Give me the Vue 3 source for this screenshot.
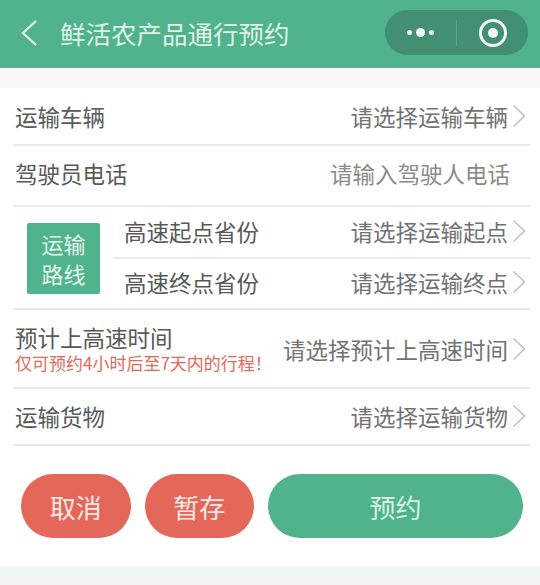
<script setup>
const rowsTop = [
  { id: 'vehicle', label: '运输车辆', value: '请选择运输车辆' }
]
</script>

<template>
  <div class="page">
    <header class="nav">
      <svg class="back" width="20" height="28" viewBox="0 0 20 28">
        <path d="M16 2 L3 14 L16 26" fill="none" stroke="#e3f3ec" stroke-width="2.2" />
      </svg>
      <span class="nav-title">鲜活农产品通行预约</span>
      <div class="capsule">
        <div class="cap-dots">
          <i class="dot small"></i><i class="dot big"></i><i class="dot small"></i>
        </div>
        <i class="cap-sep"></i>
        <div class="cap-target"><i class="target-in"></i></div>
      </div>
    </header>

    <main class="form">
      <div class="row r1" v-for="r in rowsTop" :key="r.id">
        <span class="label">{{ r.label }}</span>
        <span class="value">{{ r.value }}</span>
        <svg class="chev" width="14" height="24" viewBox="0 0 14 24"><path d="M1.5 1.5 L12.5 12 L1.5 22.5" fill="none" stroke="#bdbdbd" stroke-width="1.4" /></svg>
      </div>
      <div class="row r2">
        <span class="label">驾驶员电话</span>
        <span class="value input">请输入驾驶人电话</span>
      </div>
      <div class="route">
        <div class="route-tag"><span>运输</span><span>路线</span></div>
        <div class="route-rows">
          <div class="route-row first">
            <span class="label">高速起点省份</span>
            <span class="value">请选择运输起点</span>
            <svg class="chev" width="14" height="24" viewBox="0 0 14 24"><path d="M1.5 1.5 L12.5 12 L1.5 22.5" fill="none" stroke="#bdbdbd" stroke-width="1.4" /></svg>
          </div>
          <div class="route-row">
            <span class="label">高速终点省份</span>
            <span class="value">请选择运输终点</span>
            <svg class="chev" width="14" height="24" viewBox="0 0 14 24"><path d="M1.5 1.5 L12.5 12 L1.5 22.5" fill="none" stroke="#bdbdbd" stroke-width="1.4" /></svg>
          </div>
        </div>
      </div>
      <div class="row r4">
        <div class="stack">
          <span class="label">预计上高速时间</span>
          <span class="hint">仅可预约4小时后至7天内的行程！</span>
        </div>
        <span class="value">请选择预计上高速时间</span>
        <svg class="chev" width="14" height="24" viewBox="0 0 14 24"><path d="M1.5 1.5 L12.5 12 L1.5 22.5" fill="none" stroke="#bdbdbd" stroke-width="1.4" /></svg>
      </div>
      <div class="row r5">
        <span class="label">运输货物</span>
        <span class="value">请选择运输货物</span>
        <svg class="chev" width="14" height="24" viewBox="0 0 14 24"><path d="M1.5 1.5 L12.5 12 L1.5 22.5" fill="none" stroke="#bdbdbd" stroke-width="1.4" /></svg>
      </div>
      <div class="actions">
        <button class="btn red">取消</button>
        <button class="btn red">暂存</button>
        <button class="btn green">预约</button>
      </div>
    </main>
    <div class="foot"></div>
  </div>
</template>

<style scoped>
.page {
  width: 540px;
  height: 585px;
  display: flex;
  flex-direction: column;
  overflow: hidden;
  background: #f5f6f5;
  font-family: "Noto Sans CJK SC", "Liberation Sans", sans-serif;
}
.nav {
  height: 68px;
  flex: none;
  background: #50b38b;
  display: flex;
  align-items: center;
  padding: 0 12px 0 20px;
  box-sizing: border-box;
}
.back { flex: none; margin-top: -2px; }
.nav-title {
  margin-left: 20px;
  color: #dff2ea;
  font-size: 25.5px;
  line-height: 32px;
  margin-top: -3px;
}
.capsule {
  margin-left: auto;
  width: 143px;
  height: 45px;
  margin-top: -3px;
  border-radius: 23px;
  background: #438f72;
  display: flex;
  align-items: center;
}
.cap-dots {
  width: 71px;
  display: flex;
  justify-content: center;
  align-items: center;
  gap: 4px;
}
.dot { display: block; border-radius: 50%; background: #f1f8f5; }
.dot.small { width: 5px; height: 5px; }
.dot.big { width: 9px; height: 9px; }
.cap-sep { width: 1px; height: 26px; background: #56a385; }
.cap-target {
  width: 28px;
  height: 28px;
  margin-left: 22px;
  box-sizing: border-box;
  border: 3px solid #f1f8f5;
  border-radius: 50%;
  display: flex;
  align-items: center;
  justify-content: center;
}
.target-in { display: block; width: 10px; height: 10px; border-radius: 50%; background: #f1f8f5; }
.form {
  margin-top: 20px;
  flex: 1;
  background: #fff;
  display: flex;
  flex-direction: column;
}
.row {
  margin: 0 10px 0 13px;
  padding: 0 4px 0 2px;
  display: flex;
  align-items: center;
  border-bottom: 2px solid #e9e9e9;
  box-sizing: border-box;
}
.r1 { height: 58px; }
.r2 { height: 61px; padding-bottom: 6px; }
.r4 { height: 79px; }
.r5 { height: 57px; padding-bottom: 2px; }
.label { font-size: 22.5px; line-height: 28px; color: #585858; }
.value {
  margin-left: auto;
  font-size: 22.5px;
  line-height: 28px;
  color: #727272;
  white-space: nowrap;
}
.value.input { margin-right: 16px; color: #8a8a8a; }
.chev { flex: none; margin-left: 4px; }
.route {
  margin: 0 10px 0 13px;
  height: 103px;
  display: flex;
  border-bottom: 2px solid #e9e9e9;
  box-sizing: border-box;
}
.route-tag {
  margin: 16px 0 0 14px;
  width: 73px;
  height: 71px;
  padding-bottom: 2px;
  box-sizing: border-box;
  background: #50b38b;
  color: #e3f4ec;
  font-size: 22px;
  line-height: 30px;
  border-radius: 2px;
  display: flex;
  flex-direction: column;
  align-items: center;
  justify-content: center;
  flex: none;
}
.route-rows {
  margin-left: 13px;
  flex: 1;
  display: flex;
  flex-direction: column;
}
.route-row {
  flex: 1;
  display: flex;
  align-items: center;
  padding: 0 4px 2px 11px;
}
.route-row.first { border-bottom: 2px solid #e9e9e9; }
.stack { display: flex; flex-direction: column; margin-bottom: 2px; }
.hint { font-size: 17px; line-height: 20px; color: #e4685a; white-space: nowrap; margin-top: 2px; }
.actions {
  display: flex;
  gap: 14px;
  padding: 28px 17px 0 21px;
}
.btn {
  height: 64px;
  border: none;
  border-radius: 32px;
  font-family: inherit;
  font-size: 26px;
  padding: 0;
}
.btn.red { width: 109.5px; background: #e3685a; color: #fbe9e6; }
.btn.green { flex: 1; background: #50b38b; color: #d9f2e7; }
.foot { height: 19px; flex: none; background: #f1f5f3; }
</style>
